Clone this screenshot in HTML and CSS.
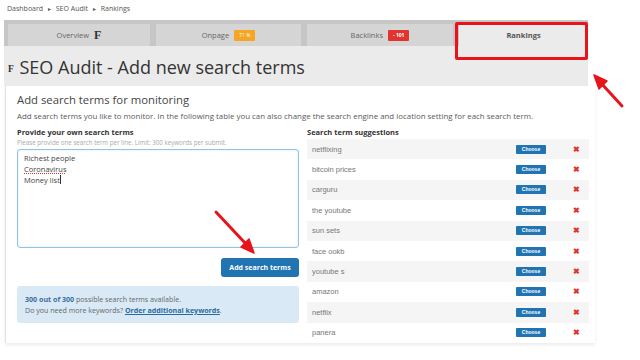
FILE: index.html
```html
<!DOCTYPE html>
<html>
<head>
<meta charset="utf-8">
<link rel="stylesheet" href="styles.css">
</head>
<body>
<div class="breadcrumb">Dashboard <span class="sep">&#9656;</span> SEO Audit <span class="sep">&#9656;</span> Rankings</div>
<div class="page">
  <div class="tabs">
    <div class="tab t1">Overview <span class="grade">F</span></div>
    <div class="tab t2">Onpage <span class="badge orange">71 %</span></div>
    <div class="tab t3">Backlinks <span class="badge red">- 101</span></div>
    <div class="tab t4 active">Rankings</div>
  </div>
  <div class="header"><span class="grade small">F</span> SEO Audit - Add new search terms</div>
  <div class="panel">
    <h2 class="heading">Add search terms for monitoring</h2>
    <p class="desc">Add search terms you like to monitor. In the following table you can also change the search engine and location setting for each search term.</p>
    <div class="cols">
      <div class="col left">
        <div class="label">Provide your own search terms</div>
        <div class="hint">Please provide one search term per line. Limit: 300 keywords per submit.</div>
        <div class="textarea">
          <div>Richest people</div>
          <div><span class="spell">Coronavirus</span></div>
          <div>Money list<span class="caret"></span></div>
        </div>
        <div class="btnrow"><button class="btn">Add search terms</button></div>
        <div class="info">
          <div><b>300 out of 300</b> possible search terms available.</div>
          <div>Do you need more keywords? <a class="link">Order additional keywords</a>.</div>
        </div>
      </div>
      <div class="col right">
        <div class="label">Search term suggestions</div>
        <div class="list">
          <div class="row"><span class="term">netflixing</span><span class="choose">Choose</span><span class="x">&#10006;</span></div>
          <div class="row"><span class="term">bitcoin prices</span><span class="choose">Choose</span><span class="x">&#10006;</span></div>
          <div class="row"><span class="term">carguru</span><span class="choose">Choose</span><span class="x">&#10006;</span></div>
          <div class="row"><span class="term">the youtube</span><span class="choose">Choose</span><span class="x">&#10006;</span></div>
          <div class="row"><span class="term">sun sets</span><span class="choose">Choose</span><span class="x">&#10006;</span></div>
          <div class="row"><span class="term">face ookb</span><span class="choose">Choose</span><span class="x">&#10006;</span></div>
          <div class="row"><span class="term">youtube s</span><span class="choose">Choose</span><span class="x">&#10006;</span></div>
          <div class="row"><span class="term">amazon</span><span class="choose">Choose</span><span class="x">&#10006;</span></div>
          <div class="row"><span class="term">netflix</span><span class="choose">Choose</span><span class="x">&#10006;</span></div>
          <div class="row"><span class="term">panera</span><span class="choose">Choose</span><span class="x">&#10006;</span></div>
        </div>
      </div>
    </div>
  </div>
</div>
<div class="highlight"></div>
<svg class="overlay" width="640" height="360" viewBox="0 0 640 360">
  <g stroke="#e8141b" stroke-width="3" stroke-linecap="round" fill="#e8141b">
    <line x1="622" y1="106" x2="601" y2="83"/>
    <polygon points="594,75 607,81 599,89" stroke-width="1.5" stroke-linejoin="round"/>
    <line x1="216" y1="212" x2="246" y2="244"/>
    <polygon points="254,253 241,247 249,239" stroke-width="1.5" stroke-linejoin="round"/>
  </g>
</svg>
</body>
</html>
```
FILE: styles.css
```css
* { box-sizing: border-box; }
body {
  margin: 0;
  width: 640px;
  height: 360px;
  overflow: hidden;
  background: #fff;
  font-family: "Open Sans", "Noto Sans", sans-serif;
  color: #444;
  position: relative;
}
.breadcrumb {
  height: 20px;
  padding: 4px 0 0 7px;
  font-size: 7px;
  color: #555;
  line-height: 10px;
}
.breadcrumb .sep { font-size: 6px; margin: 0 3px; color: #555; }
.page {
  margin-left: 4px;
  width: 584px;
}
.tabs {
  display: flex;
  gap: 6px;
  background: #c6c6c6;
  padding: 4px 0 0 4px;
  height: 26px;
}
.tab {
  background: #d5d5d5;
  display: flex;
  align-items: center;
  justify-content: center;
  gap: 5px;
  font-size: 7.5px;
  color: #666;
  height: 22px;
}
.t1 { width: 142px; }
.t2 { width: 145px; }
.t3 { width: 146px; }
.t4 { flex: 1; }
.tab.active {
  background: #ebebeb;
  font-weight: 700;
  color: #555;
  height: 22px;
}
.grade {
  font-family: "Liberation Serif", serif;
  font-weight: 700;
  font-size: 12px;
  color: #333;
}
.grade.small { font-size: 9.5px; margin-right: 1px; vertical-align: 2px; }
.badge {
  color: #fff;
  font-size: 5px;
  height: 11px;
  line-height: 11px;
  padding: 0 5px;
  border-radius: 1px;
}
.badge.orange { background: #f5a623; }
.badge.red { background: #e2332c; font-weight: 700; }
.header {
  height: 40px;
  background: #ebebeb;
  padding: 9px 0 0 4px;
  font-size: 18px;
  color: #333;
  line-height: 24px;
}
.panel {
  background: #fff;
  margin-left: 1px;
  width: 590px;
  height: 257px;
  padding: 6px 6px 0 11px;
  border-left: 1px solid #e2e2e2;
  box-shadow: 0 2px 3px rgba(0,0,0,0.08);
}
.heading {
  margin: 0;
  font-size: 11.3px;
  font-weight: 400;
  color: #444;
  line-height: 16px;
}
.desc {
  margin: 3px 0 0 0;
  font-size: 7.9px;
  color: #5a5a5a;
  line-height: 10px;
}
.cols {
  display: flex;
  gap: 8px;
  margin-top: 6px;
}
.col { width: 282px; }
.label {
  font-size: 7.5px;
  font-weight: 700;
  color: #333;
  line-height: 10px;
}
.hint {
  font-size: 6.2px;
  color: #aaa;
  margin-top: 2px;
  line-height: 8px;
  white-space: nowrap;
}
.textarea {
  margin-top: 2px;
  height: 99px;
  border: 1px solid #8fc4e4;
  border-radius: 3px;
  padding: 3px 6px;
  font-size: 7.5px;
  line-height: 11px;
  color: #444;
  box-shadow: inset 0 0 2px rgba(100,160,210,0.3);
}
.spell {
  text-decoration: underline dotted #d33;
  text-decoration-thickness: 1px;
  text-underline-offset: 1px;
}
.caret {
  display: inline-block;
  width: 1px;
  height: 9px;
  background: #333;
  vertical-align: -1px;
}
.btnrow {
  display: flex;
  justify-content: flex-end;
  margin-top: 10px;
}
.btn {
  font-family: "Open Sans", sans-serif;
  background: #1f74b1;
  color: #fff;
  border: 0;
  border-radius: 3px;
  width: 78px;
  height: 19px;
  font-size: 7px;
  font-weight: 700;
  padding: 0;
}
.info {
  margin-top: 9px;
  background: #d9eaf6;
  border-radius: 3px;
  height: 37px;
  padding: 8px 8px;
  font-size: 7.1px;
  line-height: 11px;
  color: #666;
}
.info b { color: #3d6f99; }
.link {
  color: #2b6aa0;
  font-weight: 700;
  text-decoration: underline;
}
.list { margin-top: 2px; }
.row {
  height: 20.4px;
  display: flex;
  align-items: center;
  padding-left: 5px;
  font-family: "Liberation Sans", Arial, sans-serif;
  font-size: 7.5px;
  color: #777;
}
.row:nth-child(odd) { background: #f5f5f5; }
.term { flex: 1; }
.choose {
  background: #1f74b1;
  color: #fff;
  font-size: 5px;
  font-weight: 700;
  width: 30px;
  height: 9px;
  line-height: 9px;
  text-align: center;
  border-radius: 1px;
  margin-right: 17px;
}
.x {
  width: 26px;
  text-align: center;
  color: #e2332c;
  font-size: 8px;
  font-weight: 700;
}
.highlight {
  position: absolute;
  left: 455px;
  top: 22px;
  width: 133px;
  height: 38px;
  border: 3px solid #e8141b;
  border-radius: 2px;
}
.overlay {
  position: absolute;
  left: 0;
  top: 0;
  pointer-events: none;
}
```
